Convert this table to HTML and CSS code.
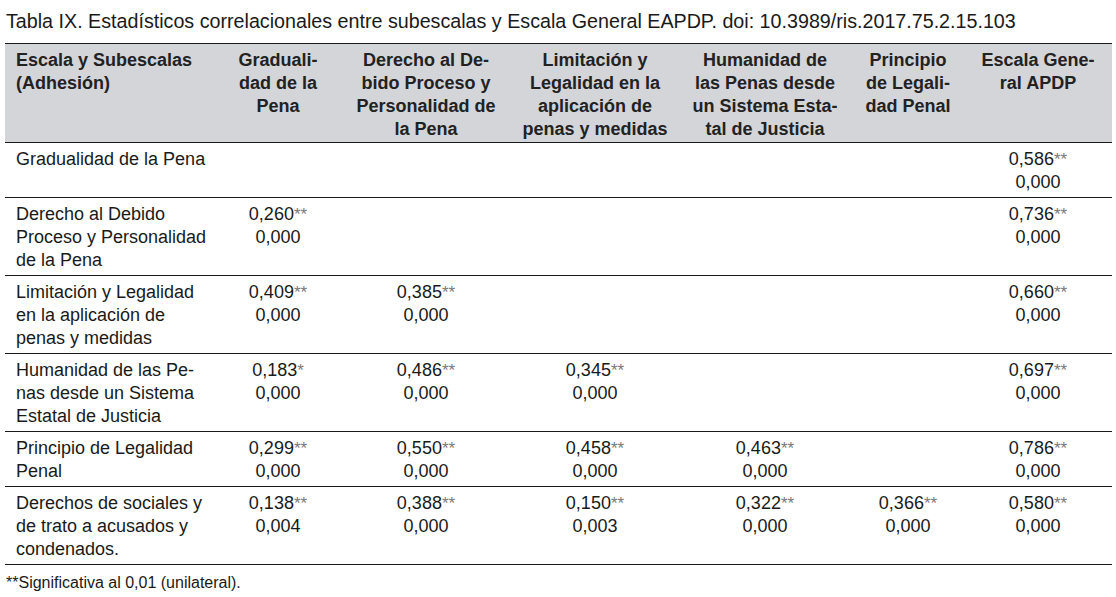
FILE: index.html
```html
<!DOCTYPE html>
<html lang="es">
<head>
<meta charset="utf-8">
<title>Tabla IX</title>
<link rel="stylesheet" href="styles.css">
</head>
<body>
<div class="page">
  <p class="title">Tabla IX. Estadísticos correlacionales entre subescalas y Escala General EAPDP. doi: 10.3989/ris.2017.75.2.15.103</p>
  <table class="tbl">
    <colgroup>
      <col class="w1"><col class="w2"><col class="w3"><col class="w4"><col class="w5"><col class="w6"><col class="w7">
    </colgroup>
    <thead>
      <tr>
        <th class="lab">Escala y Subescalas<br>(Adhesión)</th>
        <th>Graduali-<br>dad de la<br>Pena</th>
        <th>Derecho al De-<br>bido Proceso y<br>Personalidad de<br>la Pena</th>
        <th>Limitación y<br>Legalidad en la<br>aplicación de<br>penas y medidas</th>
        <th>Humanidad de<br>las Penas desde<br>un Sistema Esta-<br>tal de Justicia</th>
        <th>Principio<br>de Legali-<br>dad Penal</th>
        <th>Escala Gene-<br>ral APDP</th>
      </tr>
    </thead>
    <tbody>
      <tr>
        <td class="lab">Gradualidad de la Pena</td>
        <td></td><td></td><td></td><td></td><td></td>
        <td>0,586<span class="sig">**</span><br>0,000</td>
      </tr>
      <tr>
        <td class="lab">Derecho al Debido<br>Proceso y Personalidad<br>de la Pena</td>
        <td>0,260<span class="sig">**</span><br>0,000</td>
        <td></td><td></td><td></td><td></td>
        <td>0,736<span class="sig">**</span><br>0,000</td>
      </tr>
      <tr>
        <td class="lab">Limitación y Legalidad<br>en la aplicación de<br>penas y medidas</td>
        <td>0,409<span class="sig">**</span><br>0,000</td>
        <td>0,385<span class="sig">**</span><br>0,000</td>
        <td></td><td></td><td></td>
        <td>0,660<span class="sig">**</span><br>0,000</td>
      </tr>
      <tr>
        <td class="lab">Humanidad de las Pe-<br>nas desde un Sistema<br>Estatal de Justicia</td>
        <td>0,183<span class="sig">*</span><br>0,000</td>
        <td>0,486<span class="sig">**</span><br>0,000</td>
        <td>0,345<span class="sig">**</span><br>0,000</td>
        <td></td><td></td>
        <td>0,697<span class="sig">**</span><br>0,000</td>
      </tr>
      <tr>
        <td class="lab">Principio de Legalidad<br>Penal</td>
        <td>0,299<span class="sig">**</span><br>0,000</td>
        <td>0,550<span class="sig">**</span><br>0,000</td>
        <td>0,458<span class="sig">**</span><br>0,000</td>
        <td>0,463<span class="sig">**</span><br>0,000</td>
        <td></td>
        <td>0,786<span class="sig">**</span><br>0,000</td>
      </tr>
      <tr>
        <td class="lab">Derechos de sociales y<br>de trato a acusados y<br>condenados.</td>
        <td>0,138<span class="sig">**</span><br>0,004</td>
        <td>0,388<span class="sig">**</span><br>0,000</td>
        <td>0,150<span class="sig">**</span><br>0,003</td>
        <td>0,322<span class="sig">**</span><br>0,000</td>
        <td>0,366<span class="sig">**</span><br>0,000</td>
        <td>0,580<span class="sig">**</span><br>0,000</td>
      </tr>
    </tbody>
  </table>
  <p class="note">**Significativa al 0,01 (unilateral).</p>
</div>
</body>
</html>
```
FILE: styles.css
```css
html, body {
  margin: 0;
  padding: 0;
  background: #ffffff;
}
.page {
  font-family: "Liberation Sans", Arial, sans-serif;
  color: #1a1a1a;
  padding: 8px 0 0 5px;
}
.title {
  margin: 0 0 0 1px;
  font-size: 19.7px;
  line-height: 26px;
  height: 35px;
  white-space: nowrap;
}
.tbl {
  border-collapse: collapse;
  table-layout: fixed;
  width: 1107px;
  font-size: 18px;
  line-height: 23px;
}
.w1 { width: 211px; }
.w2 { width: 124px; }
.w3 { width: 172px; }
.w4 { width: 166px; }
.w5 { width: 174px; }
.w6 { width: 112px; }
.w7 { width: 148px; }
.tbl thead tr {
  background: #d4d5d9;
  border-top: 1px solid #1a1a1a;
  border-bottom: 1px solid #1a1a1a;
}
.tbl th {
  font-weight: bold;
  text-align: center;
  vertical-align: top;
  padding: 5px 0 1px;
  white-space: nowrap;
  color: #222;
}
.tbl td {
  text-align: center;
  vertical-align: top;
  padding: 5px 0 3px;
  white-space: nowrap;
}
.tbl tbody tr {
  border-bottom: 1px solid #1a1a1a;
}
.tbl .lab {
  text-align: left;
  padding-left: 11px;
}
.sig {
  font-size: 17px;
  color: #7a7a7a;
}
.note {
  margin: 7px 0 0 1px;
  font-size: 16px;
  line-height: 22px;
  white-space: nowrap;
}
```
